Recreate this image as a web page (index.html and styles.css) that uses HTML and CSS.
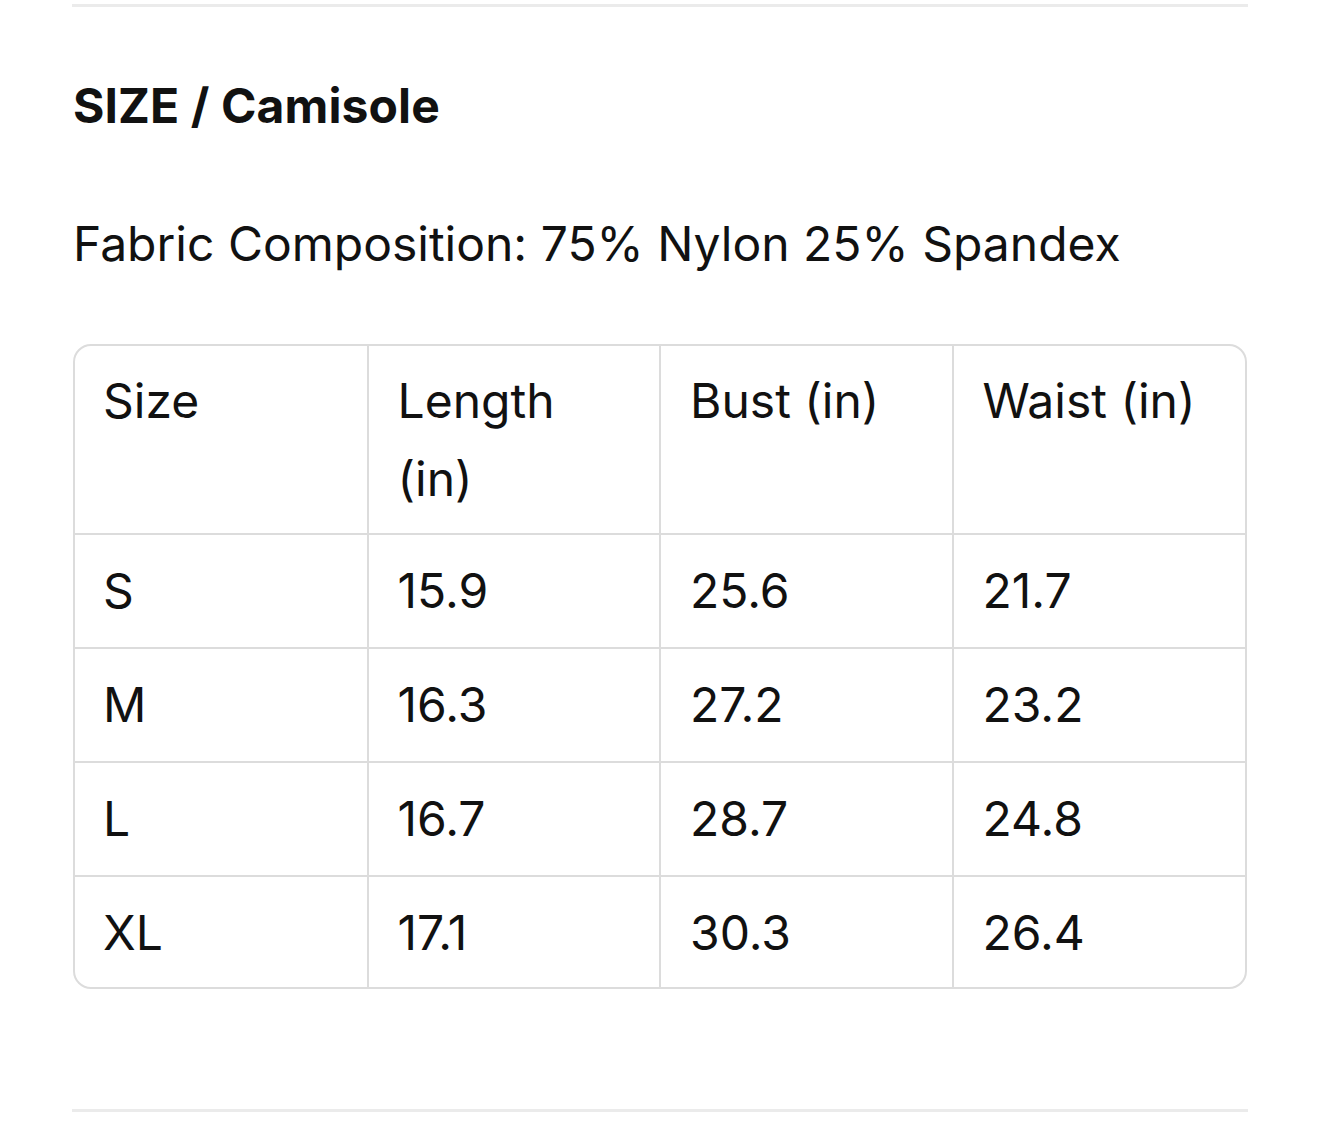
FILE: index.html
```html
<!DOCTYPE html>
<html>
<head>
<meta charset="utf-8">
<link rel="stylesheet" href="styles.css">
</head>
<body>
<div class="page">
  <div class="rule top-rule"></div>
  <h2 class="title">SIZE / Camisole</h2>
  <p class="fabric">Fabric Composition: 75% Nylon 25% Spandex</p>
  <div class="table-wrap">
    <table class="size-table">
      <thead>
        <tr><th>Size</th><th>Length (in)</th><th>Bust (in)</th><th>Waist (in)</th></tr>
      </thead>
      <tbody>
        <tr><td>S</td><td>15.9</td><td>25.6</td><td>21.7</td></tr>
        <tr><td>M</td><td>16.3</td><td>27.2</td><td>23.2</td></tr>
        <tr><td>L</td><td>16.7</td><td>28.7</td><td>24.8</td></tr>
        <tr><td>XL</td><td>17.1</td><td>30.3</td><td>26.4</td></tr>
      </tbody>
    </table>
  </div>
  <div class="rule bottom-rule"></div>
</div>
</body>
</html>
```

FILE: styles.css
```css
html, body {
  margin: 0;
  padding: 0;
  background: #ffffff;
}
body {
  font-family: Inter, "Noto Sans", "Liberation Sans", sans-serif;
  color: #111111;
}
.page {
  padding: 4px 72px 0 72px;
  width: 1176px;
}
.rule {
  height: 3px;
  background: #ebebeb;
}
.title {
  margin: 67px 0 0 1px;
  font-size: 48px;
  font-weight: 700;
  line-height: 64px;
  letter-spacing: 0.1px;
}
.fabric {
  margin: 76px 0 0 1px;
  font-size: 48px;
  font-weight: 400;
  line-height: 60px;
}
.table-wrap {
  margin: 70px 0 0 1px;
  width: 1174px;
  border: 2px solid #dcdcdc;
  border-radius: 18px;
  overflow: hidden;
  box-sizing: border-box;
}
.size-table {
  width: 100%;
  border-collapse: collapse;
  table-layout: fixed;
}
.size-table th,
.size-table td {
  text-align: left;
  vertical-align: top;
  font-weight: 400;
  font-size: 48px;
  line-height: 78px;
  padding: 17px 28px 17px 29px;
  border-right: 2px solid #dcdcdc;
  border-bottom: 2px solid #dcdcdc;
}
.size-table th {
  padding-top: 16px;
  padding-bottom: 15px;
}
.size-table th:first-child,
.size-table td:first-child {
  padding-left: 28px;
}
.size-table th:last-child,
.size-table td:last-child {
  border-right: none;
}
.size-table tbody tr:last-child td {
  border-bottom: none;
  padding-bottom: 15px;
}
.bottom-rule {
  margin-top: 120px;
}
```
